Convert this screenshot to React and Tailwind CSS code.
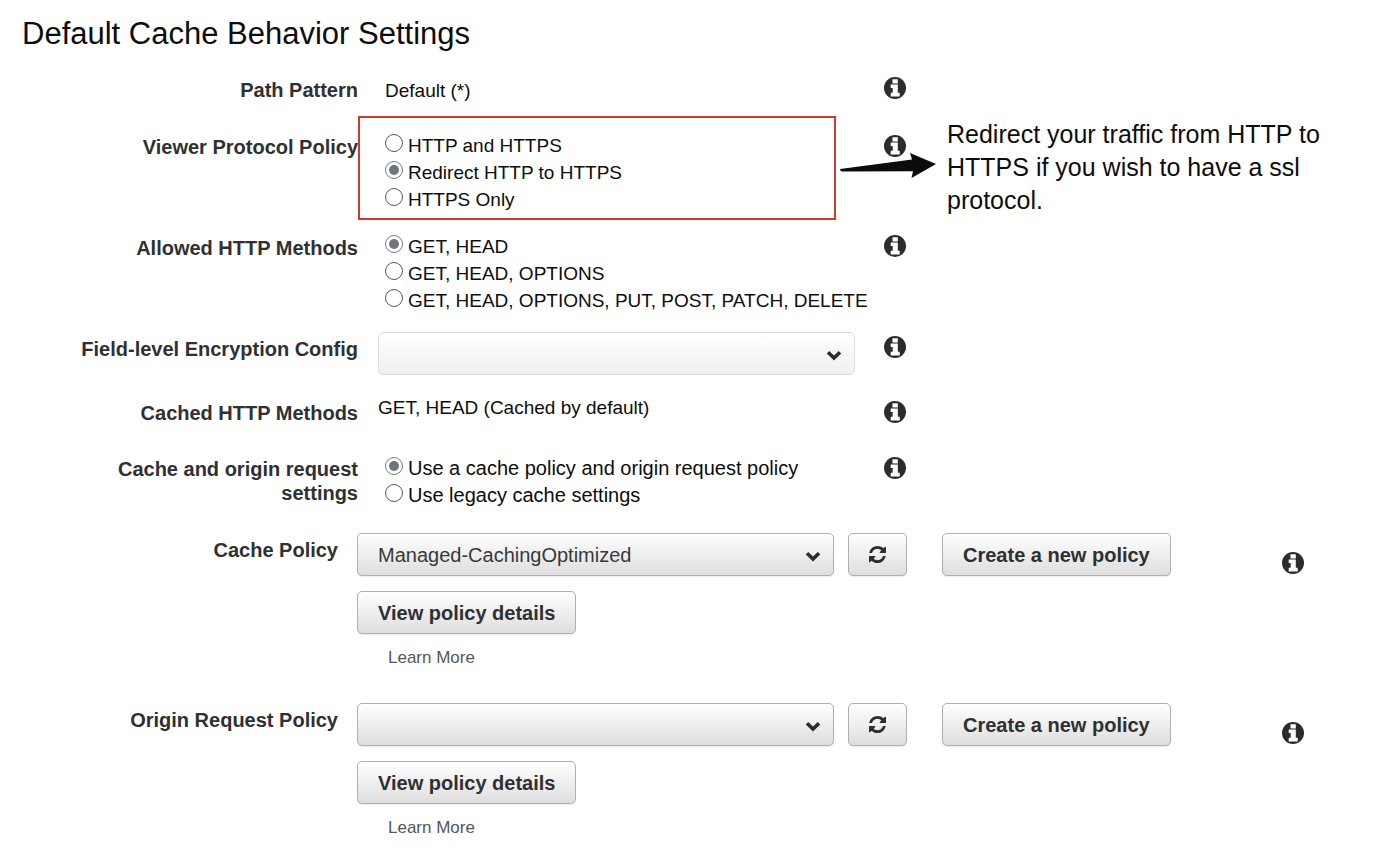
import React from "react";

function InfoButton({ label, className = "" }) {
  return (
    <button type="button" aria-label={`About ${label}`} className={`block size-[22px] shrink-0 ${className}`}>
      <svg viewBox="0 0 22 22" className="block size-[22px]" aria-hidden="true">
        <circle cx="11" cy="11" r="11" fill="#2b2c2f" />
        <path d="M8.5 2.300h5.300v4.200H8.500zM6.700 7.500h7.100v8.200h1.900v3.800H6.700v-3.800h2v-4.600h-2z" fill="#fff" />
      </svg>
    </button>
  );
}

function Row({ id, label, group, className = "", labelClass = "pt-1", infoClass = "pt-[3px]", contentClass = "", children, after }) {
  const labelText = `w-[358px] shrink-0 text-right text-[20px] leading-6 font-bold text-[#2f3033] ${labelClass}`;
  return (
    <div role={group ? "radiogroup" : undefined} aria-label={group ? label : undefined} className={`flex items-start ${className}`}>
      {id ? <label htmlFor={id} className={labelText}>{label}</label> : <div className={labelText}>{label}</div>}
      <div className={`w-[526px] shrink-0 ${contentClass}`}>{children}</div>
      <div className={infoClass}>
        <InfoButton label={label} />
      </div>
      {after}
    </div>
  );
}

function Radios({ name, options, selected, className = "pl-[27px] text-[19px]" }) {
  return (
    <div className={`flex flex-col pt-px ${className}`}>
      {options.map((text, i) => (
        <label key={text} className="flex items-start gap-[5px] leading-[27px] whitespace-nowrap text-[#0d0d0d]">
          <input
            type="radio"
            name={name}
            defaultChecked={i === selected}
            className="mt-[2px] size-[18px] shrink-0 appearance-none rounded-full border border-[#55575c] bg-white checked:border-[#777b80] checked:bg-[#6f757d] checked:bg-clip-content checked:p-[3px]"
          />
          {text}
        </label>
      ))}
    </div>
  );
}

function Chevron() {
  return (
    <svg viewBox="0 0 16 12" className="pointer-events-none absolute top-[17px] right-[13px] h-3 w-4" aria-hidden="true">
      <path d="M2 3.200l6 5.800 6-5.800" fill="none" stroke="#2b2c2f" strokeWidth="3.600" />
    </svg>
  );
}

const raised = "rounded-[5px] border border-[#b0aeae] bg-linear-to-b from-white to-[#dedede] shadow-[0_1px_1px_rgba(0,0,0,0.08)]";

function PolicyButton({ children, className = "" }) {
  return (
    <button type="button" className={`h-[43px] px-5 text-[20px] leading-6 font-bold whitespace-nowrap text-[#2f3033] ${raised} ${className}`}>
      {children}
    </button>
  );
}

function Policy({ id, label, value, className = "" }) {
  return (
    <section className={`flex items-start ${className}`}>
      <label htmlFor={id} className="w-[357px] shrink-0 pt-[5px] pr-[19px] text-right text-[20px] leading-6 font-bold text-[#2f3033]">
        {label}
      </label>
      <div className="w-[925px] shrink-0">
        <div className="flex items-start">
          <div className="relative w-[477px]">
            <select id={id} className={`block h-[43px] w-full appearance-none px-5 text-[20px] text-[#37383b] ${raised}`}>
              <option>{value}</option>
            </select>
            <Chevron />
          </div>
          <button type="button" aria-label={`Refresh ${label}`} className={`ml-[14px] flex h-[43px] w-[59px] items-center justify-center ${raised}`}>
            <svg viewBox="0 0 1536 1536" className="size-[17px]" fill="#2b2c2f" aria-hidden="true">
              <path d="M1511 928q0 5-1 7-64 268-268 434.500T764 1536q-146 0-282.500-55T238 1324l-129 129q-19 19-45 19t-45-19-19-45V960q0-26 19-45t45-19h448q26 0 45 19t19 45-19 45l-137 137q71 66 161 102t187 36q134 0 250-65t186-179q11-17 53-117 8-23 30-23h192q13 0 22.500 9.500t9.500 22.500zm25-800v448q0 26-19 45t-45 19h-448q-26 0-45-19t-19-45 19-45l138-138Q969 256 768 256q-134 0-250 65T332 500q-11 17-53 117-8 23-30 23H50q-13 0-22.500-9.500T18 608v-7q65-268 270-434.500T768 0q146 0 284 55.500T1297 212l130-129q19-19 45-19t45 19 19 45z" />
            </svg>
          </button>
          <PolicyButton className="ml-[35px]">Create a new policy</PolicyButton>
        </div>
        <PolicyButton className="mt-[15px]">View policy details</PolicyButton>
        <div className="mt-3 pl-[31px] text-[17px] leading-6">
          <a href="#learn-more" className="text-[#55565a]">Learn More</a>
        </div>
      </div>
      <InfoButton label={label} className="mt-[19px]" />
    </section>
  );
}

function Callout() {
  return (
    <div className="relative ml-[41px] w-[390px] pt-[2px]">
      <svg viewBox="0 0 98 30" className="pointer-events-none absolute top-[36px] -left-[107px] h-[30px] w-[98px]" aria-hidden="true">
        <path d="M0 17 L72 7.500 L70 1 L96 12 L71.500 26 L73 19.200 L2 19.500 Q0 19 0 17z" fill="#0b0b0b" />
      </svg>
      <p className="text-[25px] leading-[33px] text-[#0d0d0d]">
        Redirect your traffic from HTTP to HTTPS if you wish to have a ssl protocol.
      </p>
    </div>
  );
}

export default function App() {
  return (
    <main className="min-h-screen bg-white pb-5 font-['Liberation_Sans',Arial,sans-serif] text-[#0d0d0d]">
      <h1 className="pt-4 pl-[22px] text-[31px] leading-9">Default Cache Behavior Settings</h1>
      <Row label="Path Pattern" className="mt-[22px]">
        <div className="pt-[5px] pl-[27px] text-[19px] leading-6">Default (*)</div>
      </Row>
      <Row label="Viewer Protocol Policy" group className="mt-[13px]" labelClass="pt-[19px]" infoClass="pt-[19px]" after={<Callout />}>
        <div className="w-[478px] border-2 border-[#cf3a2b] pt-[13px] pb-[5px]">
          <Radios name="viewer" selected={1} className="pl-[25px] text-[19px]" options={["HTTP and HTTPS", "Redirect HTTP to HTTPS", "HTTPS Only"]} />
        </div>
      </Row>
      <Row label="Allowed HTTP Methods" group className="mt-3">
        <Radios name="methods" selected={0} options={["GET, HEAD", "GET, HEAD, OPTIONS", "GET, HEAD, OPTIONS, PUT, POST, PATCH, DELETE"]} />
      </Row>
      <Row id="encryption" label="Field-level Encryption Config" className="mt-[18px]" labelClass="pt-[5px]" infoClass="pt-1" contentClass="pl-5">
        <div className="relative w-[477px]">
          <select id="encryption" className="block h-[43px] w-full appearance-none rounded-[5px] border border-[#dddddd] bg-linear-to-b from-white to-[#efefef] px-5 text-[20px]">
            <option></option>
          </select>
          <Chevron />
        </div>
      </Row>
      <Row label="Cached HTTP Methods" className="mt-[21px]" labelClass="pt-[5px]" infoClass="pt-[5px]" contentClass="pl-5">
        <div className="text-[19px] leading-6">GET, HEAD (Cached by default)</div>
      </Row>
      <Row label="Cache and origin request settings" group className="mt-[29px]" labelClass="pt-[3px] pl-[100px]">
        <Radios name="settings" selected={0} className="pl-[27px] text-[20px]" options={["Use a cache policy and origin request policy", "Use legacy cache settings"]} />
      </Row>
      <Policy id="cache-policy" label="Cache Policy" value="Managed-CachingOptimized" className="mt-6" />
      <Policy id="origin-policy" label="Origin Request Policy" value="" className="mt-[33px]" />
    </main>
  );
}
